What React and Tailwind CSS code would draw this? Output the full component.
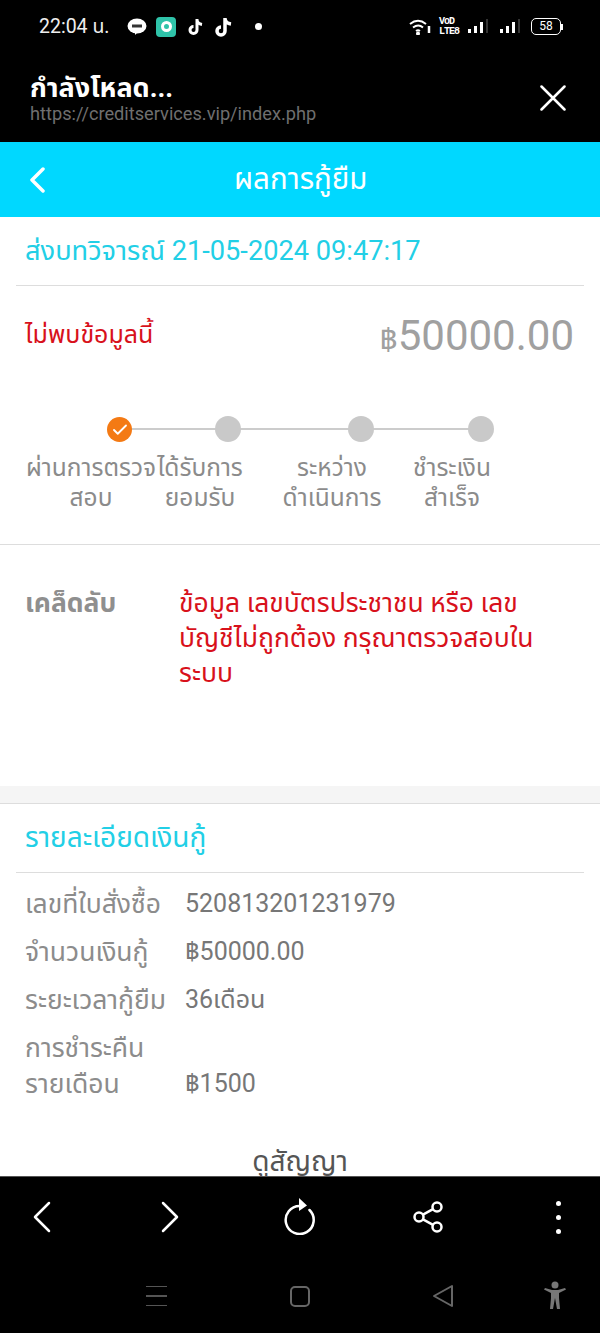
import React from 'react';
import { Check } from 'lucide-react';

const font = 'font-["Roboto","Noto_Sans","Noto_Sans_Thai","Liberation_Sans",sans-serif]';

const steps = [
    { top: 'ผ่านการตรวจ', bottom: 'สอบ', center: 'w-[130px]' },
    { top: 'ได้รับการ', bottom: 'ยอมรับ', center: 'w-[88px]' },
    { top: 'ระหว่าง', bottom: 'ดำเนินการ', center: 'w-[100px] ml-[38px]' },
    { top: 'ชำระเงิน', bottom: 'สำเร็จ', center: 'w-[82px] ml-[29px]' },
];

const Signal = () => (
    <svg width="21" height="18" viewBox="0 0 21 18" fill="#fff">
        <rect x="0" y="11" width="3" height="4" />
        <rect x="6" y="8" width="3" height="7" />
        <rect x="12" y="4" width="3" height="11" />
        <rect x="18" y="1" width="2" height="14" fill="#333" />
    </svg>
);

const StatusBar = () => (
    <div className="h-[53px] pl-[39px] pr-[37px] flex items-center justify-between text-white">
        <div className="flex items-center">
            <span className="text-[19.5px] w-[85px] text-[#eee] whitespace-nowrap">22:04 น.</span>
            <svg width="20" height="20" viewBox="0 0 20 20" className="ml-[3px]">
                <ellipse cx="10" cy="9" rx="9.5" ry="7.5" fill="#fff" />
                <path d="M8 15l3 0-3 3z" fill="#fff" />
                <rect x="5" y="7.5" width="10" height="3" fill="#333" />
            </svg>
            <div className="ml-[9px] w-[20px] h-[20px] rounded-[4px] bg-[#2fc3a9] flex items-center justify-center">
                <div className="w-[11px] h-[11px] rounded-full border-[3px] border-white" />
            </div>
            <svg width="18" height="20" viewBox="0 0 18 20" fill="none" stroke="#fff" strokeWidth="3" className="ml-[11px]">
                <path d="M10 2v11a3.5 3.5 0 1 1-3.5-3.5M10 3c.5 3 2 4 5 4.500" />
            </svg>
            <svg width="20" height="22" viewBox="0 0 20 22" fill="none" stroke="#fff" strokeWidth="3.500" className="ml-[9px]">
                <path d="M11 2v13a4 4 0 1 1-4-4M11 3c.5 3 2.500 4.500 6 5" />
            </svg>
            <div className="ml-[21px] w-[7px] h-[7px] rounded-full bg-white" />
        </div>
        <div className="flex items-center">
            <svg width="22" height="16" viewBox="0 0 22 16" fill="none" stroke="#fff" strokeWidth="2">
                <path d="M1 5c5-4 11-4 16 0M4 8.500c3.500-2.500 7-2.500 10 0M7 12c1.500-1 2.500-1 4 0" />
                <circle cx="9" cy="14.500" r="1" fill="#fff" />
                <path d="M20 7v7" strokeWidth="2.500" />
            </svg>
            <div className="ml-[8px] w-[22px] text-[10px] leading-[10px] font-bold font-['Liberation_Mono',monospace] tracking-[-1px] whitespace-nowrap">
                <div>VoD</div>
                <div>LTE8</div>
            </div>
            <div className="ml-[7px] flex items-center gap-[11px]">
                <Signal />
                <Signal />
            </div>
            <div className="ml-[10px] w-[30px] h-[17px] rounded-[5px] border-[1.5px] border-white text-[12px] leading-[14px] text-center">58</div>
            <div className="w-[2px] h-[6px] bg-white" />
        </div>
    </div>
);

const BottomBars = () => (
    <div className="h-[157px] bg-black shrink-0 border-t border-[#555]">
        <div className="h-[80px] pl-[33px] flex items-center text-white">
            <svg width="18" height="32" viewBox="0 0 18 32" fill="none" stroke="#fff" strokeWidth="2.500" strokeLinecap="round" strokeLinejoin="round">
                <path d="M16 2L2 16l14 14" />
            </svg>
            <svg width="18" height="32" viewBox="0 0 18 32" fill="none" stroke="#fff" strokeWidth="2.500" strokeLinecap="round" strokeLinejoin="round" className="ml-[110px]">
                <path d="M2 2l14 14L2 30" />
            </svg>
            <svg width="32" height="38" viewBox="0 0 32 38" fill="none" stroke="#fff" strokeWidth="2.500" strokeLinecap="round" className="ml-[105px] -mt-[3px]">
                <path d="M25.500 13A14 14 0 1 1 16 9" />
                <path d="M15 1l8 7.500-8 5.500z" fill="#fff" stroke="none" />
            </svg>
            <svg width="30" height="32" viewBox="0 0 30 32" fill="none" stroke="#fff" strokeWidth="2.500" className="ml-[97px]">
                <circle cx="24" cy="6" r="4.500" />
                <circle cx="6" cy="16" r="4.500" />
                <circle cx="24" cy="26" r="4.500" />
                <path d="M10 13.700l10-5.500M10 18.300l10 5.500" />
            </svg>
            <div className="ml-[113px] flex flex-col gap-[9px]">
                <div className="w-[5px] h-[5px] rounded-full bg-white" />
                <div className="w-[5px] h-[5px] rounded-full bg-white" />
                <div className="w-[5px] h-[5px] rounded-full bg-white" />
            </div>
        </div>
        <div className="mt-[24px] pl-[146px] flex items-center">
            <div className="w-[21px] flex flex-col gap-[8px]">
                <div className="h-[1.500px] bg-[#555]" />
                <div className="h-[1.500px] bg-[#555]" />
                <div className="h-[1.500px] bg-[#555]" />
            </div>
            <div className="ml-[123px] w-[20px] h-[21px] rounded-[5px] border-2 border-[#666]" />
            <svg width="22" height="24" viewBox="0 0 22 24" fill="none" stroke="#666" strokeWidth="2" className="ml-[122px]">
                <path d="M20 2v20L2 12z" strokeLinejoin="round" />
            </svg>
            <svg width="24" height="30" viewBox="0 0 24 30" fill="#777" className="ml-[89px]">
                <circle cx="12" cy="4" r="3.500" />
                <path d="M1 8.500l1-1.500 7 2h6l7-2 1 1.500-7 3.500v5l1 11h-3l-2-11-2 11H7l1-11v-5z" />
            </svg>
        </div>
    </div>
);

const App = () => {
    return (
        <div className={`${font} w-[600px] h-[1333px] flex flex-col bg-white overflow-hidden`}>
            <div className="h-[142px] bg-black shrink-0 text-white">
                <StatusBar />
                <div className="pl-[30px] pr-[34px] pt-[20px] flex items-center justify-between">
                    <div>
                        <div className="text-[27px] leading-[30px] font-bold">กำลังโหลด...</div>
                        <div className="text-[18.2px] leading-[22px] text-[#6f6f6f]">https://creditservices.vip/index.php</div>
                    </div>
                    <svg width="26" height="26" viewBox="0 0 26 26" fill="none" stroke="#fff" strokeWidth="2.500" strokeLinecap="round" className="-mt-[2px]">
                        <path d="M1.500 1.500l23 23M24.500 1.500l-23 23" />
                    </svg>
                </div>
            </div>

            <div className="h-[75px] bg-[#00d8ff] shrink-0 pl-[30px] flex items-center text-white">
                <svg width="15" height="26" viewBox="0 0 15 26" fill="none" stroke="#fff" strokeWidth="3.500" strokeLinecap="round" strokeLinejoin="round">
                    <path d="M13 2L2 13l11 11" />
                </svg>
                <span className="ml-[189px] text-[29.5px]">ผลการกู้ยืม</span>
            </div>

            <div className="flex-1 min-h-0 overflow-hidden">
                <div className="mx-4 px-[9px] h-[69px] border-b border-[#ddd] flex items-center text-[27.2px] text-[#22cfe6] whitespace-nowrap">
                    ส่งบทวิจารณ์ 21-05-2024 09:47:17
                </div>

                <div className="pl-[25px] pr-[26px] h-[99px] flex items-center justify-between">
                    <span className="text-[25px] text-[#d8111b] -mt-[2px]">ไม่พบข้อมูลนี้</span>
                    <span className="text-[42px] text-[#a0a0a0]"><span className="text-[31px]">฿</span>50000.00</span>
                </div>

                <div className="h-[130px] border-b border-[#ddd]">
                    <div className="relative h-[28px] mt-[30px]">
                        <div className="absolute left-[119px] w-[362px] top-[13px] h-[2px] bg-[#ccc]" />
                        <div className="absolute left-[107px] top-[2px] w-[25px] h-[25px] rounded-full bg-[#f47a14] flex items-center justify-center">
                            <Check size={18} strokeWidth={2.500} className="text-white" />
                        </div>
                        <div className="absolute left-[215px] top-[1px] w-[26px] h-[26px] rounded-full bg-[#c9c9c9]" />
                        <div className="absolute left-[348px] top-[1px] w-[26px] h-[26px] rounded-full bg-[#c9c9c9]" />
                        <div className="absolute left-[468px] top-[1px] w-[26px] h-[26px] rounded-full bg-[#c9c9c9]" />
                    </div>
                    <div className="flex pl-[26px] mt-[10px] text-[24.5px] leading-[30px] text-[#8b8b8b] text-center whitespace-nowrap">
                        {steps.map((step) => (
                            <div key={step.top} className={`${step.center} flex flex-col items-center`}>
                                <span>{step.top}</span>
                                <span>{step.bottom}</span>
                            </div>
                        ))}
                    </div>
                </div>

                <div className="h-[241px] flex pl-[25px] pt-[40px] text-[26.5px] leading-[35px]">
                    <div className="w-[154px] shrink-0 font-bold text-[#8f8f8f]">เคล็ดลับ</div>
                    <div className="text-[#d8111b] whitespace-nowrap">
                        ข้อมูล เลขบัตรประชาชน หรือ เลข<br />
                        บัญชีไม่ถูกต้อง กรุณาตรวจสอบใน<br />
                        ระบบ
                    </div>
                </div>

                <div className="h-[18px] bg-[#f5f5f5] border-b border-[#ddd]" />

                <div className="mx-4 px-[9px] h-[69px] border-b border-[#ddd] flex items-center text-[28px] text-[#22cfe6]">
                    รายละเอียดเงินกู้
                </div>

                <div className="px-[25px] pt-[13px] text-[26.5px] leading-[36px] text-[#8c8c8c] grid grid-cols-[160px_1fr] gap-y-[12px] whitespace-nowrap">
                    <div>เลขที่ใบสั่งซื้อ</div>
                    <div className="text-[25px] text-[#777]">520813201231979</div>
                    <div>จำนวนเงินกู้</div>
                    <div className="text-[25px] text-[#777]">฿50000.00</div>
                    <div>ระยะเวลากู้ยืม</div>
                    <div className="text-[25px] text-[#777]">36เดือน</div>
                    <div>การชำระคืน<br />รายเดือน</div>
                    <div className="self-end text-[25px] text-[#777]">฿1500</div>
                </div>

                <div className="mt-[42px] text-center text-[28px] leading-[36px] text-[#555]">ดูสัญญา</div>
            </div>

            <BottomBars />
        </div>
    );
};

export default App;
